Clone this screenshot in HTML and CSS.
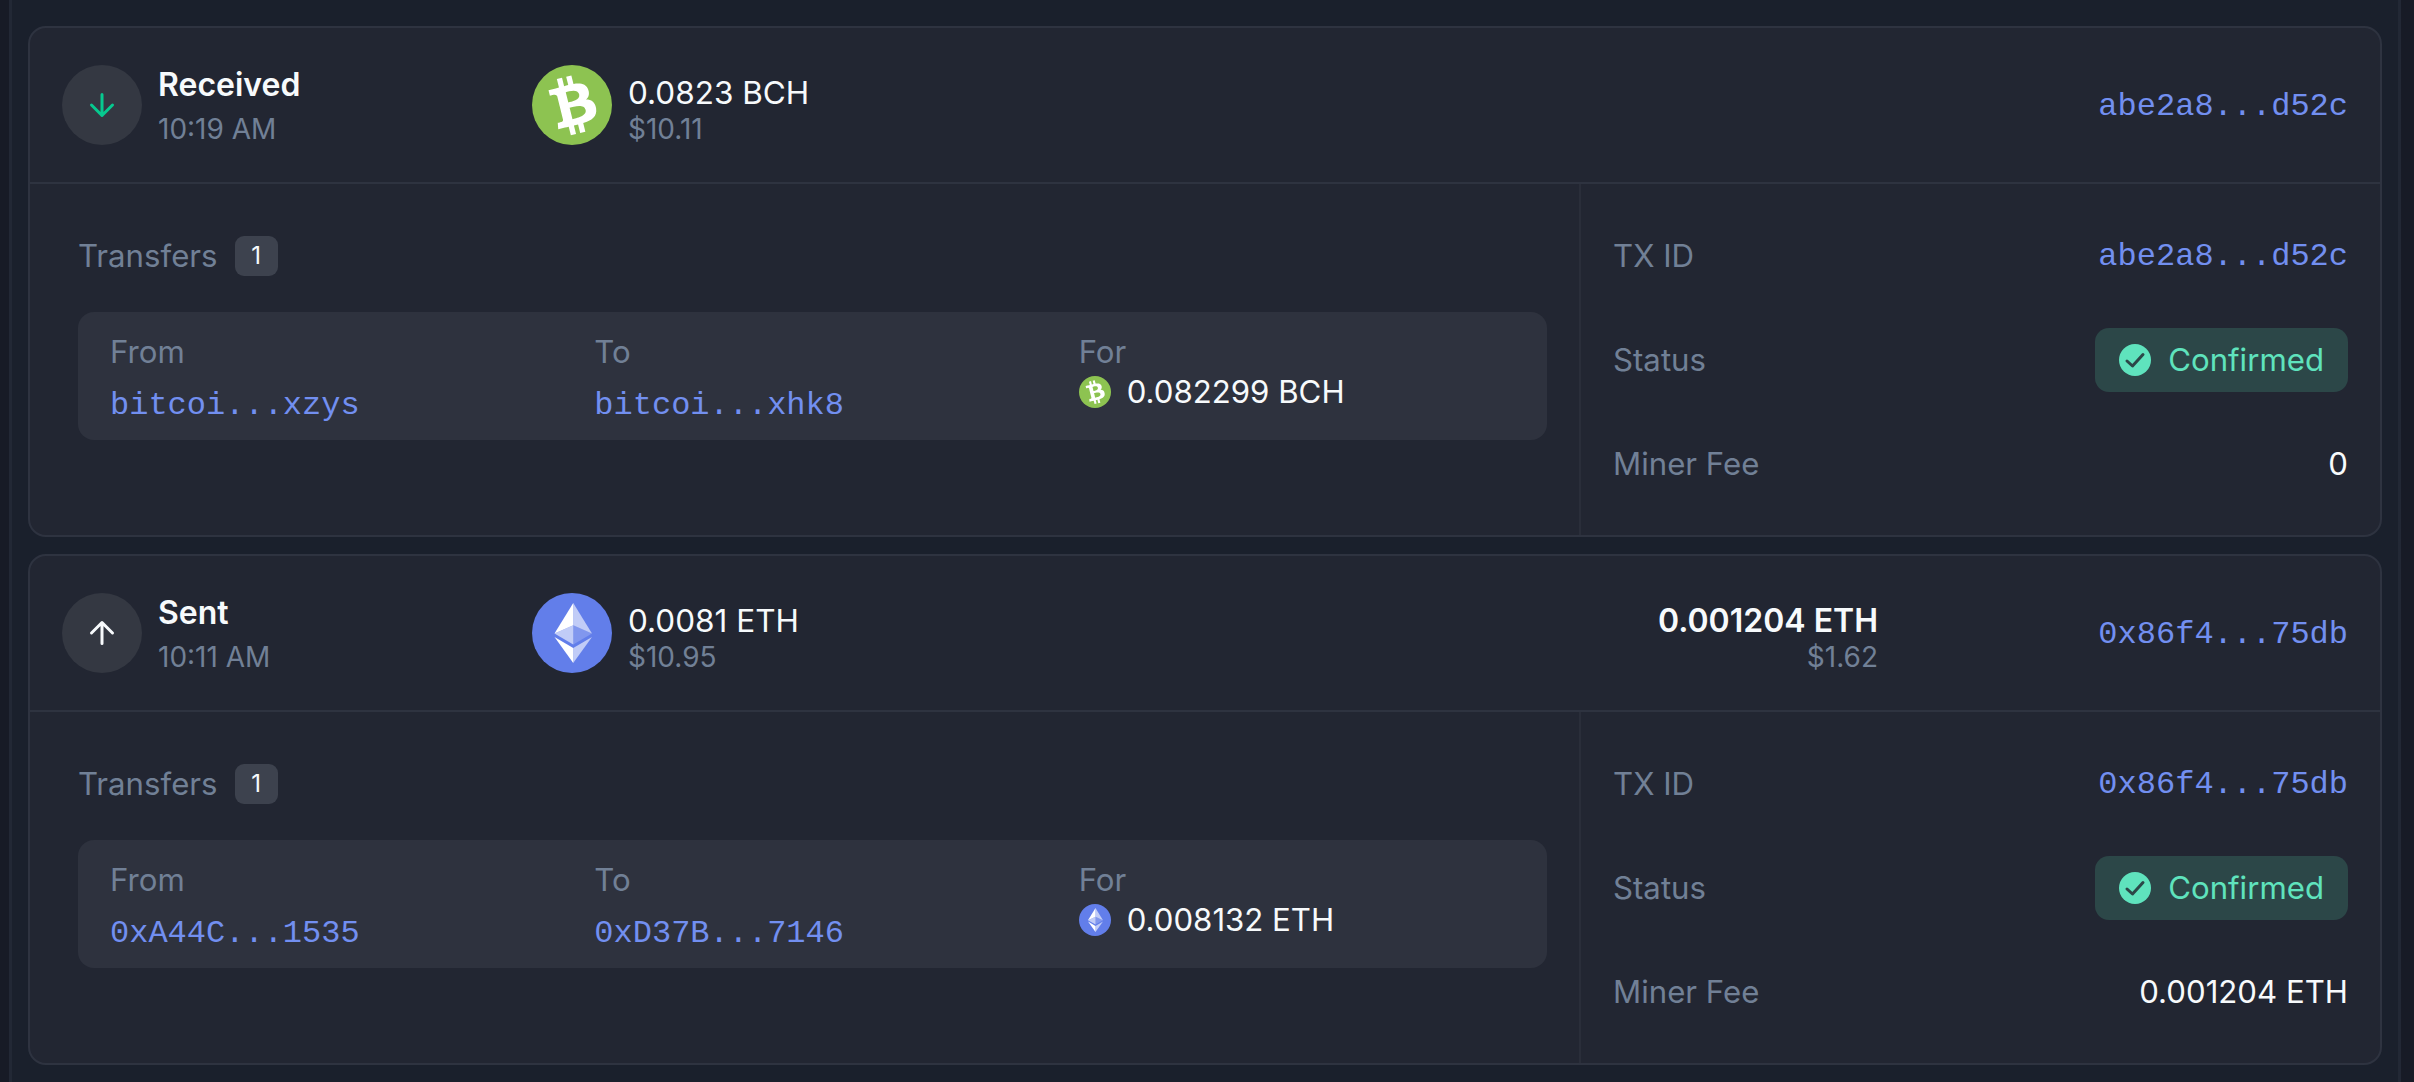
FILE: index.html
```html
<!DOCTYPE html>
<html lang="en">

<head>
    <meta charset="UTF-8">
    <meta name="viewport" content="width=device-width, initial-scale=1.0">
    <title>transactions</title>
    <link rel="stylesheet" href="styles.css">
</head>

<body>
    <svg class="defs" width="0" height="0" aria-hidden="true">
        <symbol id="bch" viewBox="0 0 32 32">
            <circle cx="16" cy="16" r="16" fill="#8dc351"></circle>
            <g transform="rotate(-28 16 16) translate(16 16) scale(1.2) translate(-16 -16)">
                <path fill="#fff" d="M23.189 14.02c.314-2.096-1.283-3.223-3.465-3.975l.708-2.84-1.728-.43-.69 2.765c-.454-.114-.92-.22-1.385-.326l.695-2.783L15.596 6l-.708 2.839c-.376-.086-.746-.17-1.104-.26l.002-.009-2.384-.595-.46 1.846s1.283.294 1.256.312c.7.175.826.638.805 1.006l-.806 3.235c.048.012.11.03.18.057l-.183-.045-1.13 4.532c-.086.212-.303.531-.793.41.018.025-1.256-.313-1.256-.313l-.858 1.978 2.25.561c.418.105.828.215 1.231.318l-.715 2.872 1.727.43.708-2.84c.472.127.93.245 1.378.357l-.706 2.828 1.728.43.715-2.866c2.948.558 5.164.333 6.097-2.333.752-2.146-.037-3.385-1.588-4.192 1.13-.26 1.98-1.003 2.207-2.538zm-3.95 5.538c-.533 2.147-4.148.986-5.32.695l.95-3.805c1.172.293 4.929.872 4.37 3.11zm.535-5.569c-.487 1.953-3.495.96-4.47.717l.86-3.45c.975.243 4.118.696 3.61 2.733z"></path>
            </g>
        </symbol>
        <symbol id="eth" viewBox="0 0 32 32">
            <circle cx="16" cy="16" r="16" fill="#627eea"></circle>
            <g fill="#fff">
                <path fill-opacity=".602" d="M16.498 4v8.87l7.497 3.35z"></path>
                <path d="M16.498 4L9 16.22l7.498-3.35z"></path>
                <path fill-opacity=".602" d="M16.498 21.968v6.027L24 17.616z"></path>
                <path d="M16.498 27.995v-6.028L9 17.616z"></path>
                <path fill-opacity=".2" d="M16.498 20.573l7.497-4.353-7.497-3.348z"></path>
                <path fill-opacity=".602" d="M9 16.22l7.498 4.353v-7.701z"></path>
            </g>
        </symbol>
        <symbol id="check" viewBox="0 0 32 32">
            <circle cx="16" cy="16" r="16" fill="#5fe3bd"></circle>
            <path d="M8 17l5.5 5L24 10.500" fill="none" stroke="#2c4748" stroke-width="3" stroke-linecap="round" stroke-linejoin="round"></path>
        </symbol>
    </svg>

    <div class="list">
        <div class="card">
            <div class="head">
                <div class="kind">
                    <div class="dir">
                        <svg class="arrow down" viewBox="0 0 24 24">
                            <path d="M12 5v14M5 12l7 7 7-7"></path>
                        </svg>
                    </div>
                    <div class="stack">
                        <div class="title">Received</div>
                        <div class="sub">10:19 AM</div>
                    </div>
                </div>
                <div class="asset">
                    <svg class="coin"><use href="#bch"></use></svg>
                    <div class="stack">
                        <div class="amount">0.0823 BCH</div>
                        <div class="sub">$10.11</div>
                    </div>
                </div>
                <div class="fee"></div>
                <div class="hash mono">abe2a8...d52c</div>
            </div>
            <div class="body">
                <div class="transfers">
                    <div class="transfers-head">
                        <span class="label">Transfers</span>
                        <span class="count">1</span>
                    </div>
                    <div class="panel">
                        <div>
                            <div class="label">From</div>
                            <div class="addr mono">bitcoi...xzys</div>
                        </div>
                        <div>
                            <div class="label">To</div>
                            <div class="addr mono">bitcoi...xhk8</div>
                        </div>
                        <div>
                            <div class="label">For</div>
                            <div class="for">
                                <svg class="coin-small"><use href="#bch"></use></svg>
                                <span>0.082299 BCH</span>
                            </div>
                        </div>
                    </div>
                </div>
                <div class="details">
                    <div class="row">
                        <span class="label">TX ID</span>
                        <span class="mono">abe2a8...d52c</span>
                    </div>
                    <div class="row">
                        <span class="label">Status</span>
                        <span class="status">
                            <svg class="check"><use href="#check"></use></svg>
                            Confirmed
                        </span>
                    </div>
                    <div class="row">
                        <span class="label">Miner Fee</span>
                        <span class="value">0</span>
                    </div>
                </div>
            </div>
        </div>

        <div class="card">
            <div class="head">
                <div class="kind">
                    <div class="dir">
                        <svg class="arrow up" viewBox="0 0 24 24">
                            <path d="M12 19V5M5 12l7-7 7 7"></path>
                        </svg>
                    </div>
                    <div class="stack">
                        <div class="title">Sent</div>
                        <div class="sub">10:11 AM</div>
                    </div>
                </div>
                <div class="asset">
                    <svg class="coin"><use href="#eth"></use></svg>
                    <div class="stack">
                        <div class="amount">0.0081 ETH</div>
                        <div class="sub">$10.95</div>
                    </div>
                </div>
                <div class="fee stack">
                    <div class="amount strong">0.001204 ETH</div>
                    <div class="sub">$1.62</div>
                </div>
                <div class="hash mono">0x86f4...75db</div>
            </div>
            <div class="body">
                <div class="transfers">
                    <div class="transfers-head">
                        <span class="label">Transfers</span>
                        <span class="count">1</span>
                    </div>
                    <div class="panel">
                        <div>
                            <div class="label">From</div>
                            <div class="addr mono">0xA44C...1535</div>
                        </div>
                        <div>
                            <div class="label">To</div>
                            <div class="addr mono">0xD37B...7146</div>
                        </div>
                        <div>
                            <div class="label">For</div>
                            <div class="for">
                                <svg class="coin-small"><use href="#eth"></use></svg>
                                <span>0.008132 ETH</span>
                            </div>
                        </div>
                    </div>
                </div>
                <div class="details">
                    <div class="row">
                        <span class="label">TX ID</span>
                        <span class="mono">0x86f4...75db</span>
                    </div>
                    <div class="row">
                        <span class="label">Status</span>
                        <span class="status">
                            <svg class="check"><use href="#check"></use></svg>
                            Confirmed
                        </span>
                    </div>
                    <div class="row">
                        <span class="label">Miner Fee</span>
                        <span class="value">0.001204 ETH</span>
                    </div>
                </div>
            </div>
        </div>
    </div>
</body>

</html>
```

FILE: styles.css
```css
body {
    margin: 0;
    background-color: #171b26;
    font-family: Inter, "Noto Sans", sans-serif;
    font-size: 31.200px;
    line-height: 40px;
    color: #f7fafc;
}

.defs {
    display: block;
    height: 0;
}

.list {
    display: flex;
    flex-direction: column;
    gap: 17px;
    margin: 0 13px 0 9px;
    padding: 26px 16px 16px;
    min-height: 1082px;
    box-sizing: border-box;
    background-color: #1a202c;
    border-left: 3px solid #222835;
    border-right: 3px solid #222835;
}

.card {
    height: 511px;
    box-sizing: border-box;
    background-color: #222632;
    border: 2px solid #2e3340;
    border-radius: 18px;
    display: flex;
    flex-direction: column;
}

.head {
    display: grid;
    grid-template-columns: 470px 1fr auto 470px;
    align-items: center;
    height: 156px;
    padding: 0 32px;
    box-sizing: border-box;
    border-bottom: 2px solid #2e3340;
}

.kind,
.asset {
    display: flex;
    align-items: center;
}

.kind {
    gap: 16px;
}

.asset {
    gap: 16px;
}

.dir {
    width: 80px;
    height: 80px;
    border-radius: 50%;
    background-color: #343842;
    display: flex;
    align-items: center;
    justify-content: center;
}

.arrow {
    width: 36px;
    height: 36px;
    fill: none;
    stroke-width: 2;
    stroke-linecap: round;
    stroke-linejoin: round;
}

.down {
    stroke: #06c98f;
}

.up {
    stroke: #f7fafc;
}

.coin {
    width: 80px;
    height: 80px;
}

.stack {
    height: 84px;
    display: flex;
    flex-direction: column;
    justify-content: flex-end;
}

.title {
    font-size: 32px;
    font-weight: 600;
    margin-bottom: 6px;
}

.amount {
    font-size: 31.500px;
    margin-bottom: -2px;
}

.strong {
    font-size: 32px;
    font-weight: 600;
}

.sub {
    font-size: 28px;
    line-height: 36px;
    color: #718096;
}

.fee {
    text-align: right;
}

.hash {
    text-align: right;
    padding-top: 3px;
}

.mono {
    font-family: "Liberation Mono", monospace;
    font-size: 32px;
    color: #728ff0;
}

.label {
    color: #718096;
}

.body {
    flex: 1;
    display: flex;
}

.transfers {
    width: 1551px;
    box-sizing: border-box;
    padding: 52px 32px 0 48px;
    border-right: 2px solid #2a2e3a;
}

.transfers-head {
    display: flex;
    align-items: center;
    gap: 17px;
    height: 40px;
}

.count {
    width: 43px;
    height: 40px;
    border-radius: 9px;
    background-color: #3d424e;
    font-size: 24px;
    text-align: center;
}

.panel {
    display: grid;
    grid-template-columns: repeat(3, 1fr);
    gap: 48px;
    margin-top: 36px;
    padding: 20px 32px 14px;
    background-color: #2e323e;
    border-radius: 16px;
}

.addr {
    margin-top: 14px;
}

.for {
    display: flex;
    align-items: center;
    gap: 16px;
}

.coin-small {
    width: 32px;
    height: 32px;
}

.details {
    flex: 1;
    display: flex;
    flex-direction: column;
    gap: 40px;
    padding: 40px 32px 0;
}

.row {
    height: 64px;
    display: flex;
    align-items: center;
    justify-content: space-between;
}

.row .mono {
    padding-top: 2px;
}

.status {
    height: 64px;
    box-sizing: border-box;
    padding: 0 24px;
    display: flex;
    align-items: center;
    gap: 17px;
    border-radius: 14px;
    background-color: #2c4748;
    color: #5fe3bd;
}

.check {
    width: 32px;
    height: 32px;
}
```
